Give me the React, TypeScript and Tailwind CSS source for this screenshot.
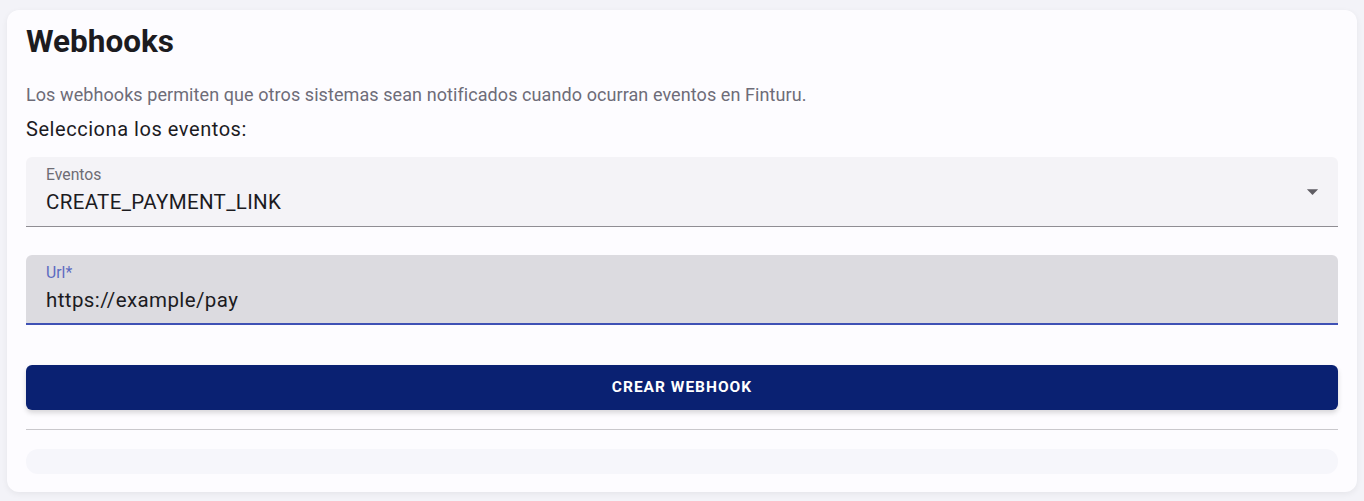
import React from "react";

export default function App() {
  return (
    <div className="min-h-[501px] w-full bg-[#f3f3f8] px-[7px] pt-[10px] pb-[9px]" style={{ fontFamily: "Roboto, 'Liberation Sans', sans-serif" }}>
      <div className="rounded-[12px] bg-[#fdfcff] px-[19px] pt-[14px] pb-[18px] shadow-[0_2px_6px_rgba(0,0,0,0.06)]">
        <h1 className="text-[31.5px] font-bold leading-[36px] text-[#1c1b1f]">Webhooks</h1>
        <p className="mt-[23px] text-[18px] leading-[24px] text-[#6e6c78] tracking-[0.08px]">
          Los webhooks permiten que otros sistemas sean notificados cuando ocurran eventos en Finturu.
        </p>
        <p className="mt-[9px] text-[20px] leading-[26px] text-[#1c1b1f] tracking-[0.55px]">Selecciona los eventos:</p>

        <div className="mt-[15px] relative h-[70px] rounded-t-[6px] bg-[#f4f3f7] border-b border-[#8f8d93] px-[20px]">
          <div className="pt-[8px] text-[15.75px] leading-[20px] text-[#6e6c74]">Eventos</div>
          <div className="mt-[4px] text-[20.5px] leading-[26px] text-[#1c1b1f] tracking-[0.35px]">CREATE_PAYMENT_LINK</div>
          <svg className="absolute right-[12px] top-[21px]" width="27" height="27" viewBox="0 0 24 24">
            <path d="M7 10l5 5 5-5z" fill="#5f5d64" />
          </svg>
        </div>

        <div className="mt-[28px] h-[70px] rounded-t-[6px] bg-[#dcdbe0] border-b-2 border-[#3f51b5] px-[20px]">
          <div className="pt-[8px] text-[15.75px] leading-[20px] text-[#5c6bc0]">Url*</div>
          <div className="mt-[4px] text-[20.5px] leading-[26px] text-[#1c1b1f] tracking-[0.4px]">https://example/pay</div>
        </div>

        <button className="mt-[40px] flex h-[45px] w-full items-center justify-center rounded-[6px] bg-[#0a2172] text-[15.5px] font-bold tracking-[1px] text-white shadow-[0_3px_5px_rgba(0,0,0,0.15)]">
          CREAR WEBHOOK
        </button>

        <div className="mt-[19px] h-px bg-[#c9c8cc]" />

        <div className="mt-[19px] h-[25px] rounded-[12px] bg-[#f6f6fb]" />
      </div>
    </div>
  );
}
